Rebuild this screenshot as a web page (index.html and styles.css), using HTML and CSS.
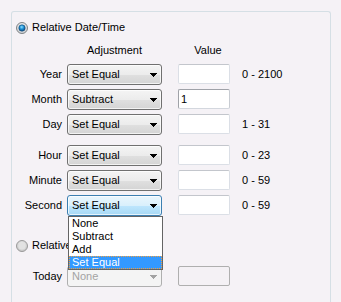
FILE: index.html
```html
<!DOCTYPE html>
<html lang="en">
<head>
    <meta charset="UTF-8">
    <title>Relative Date/Time</title>
    <link rel="stylesheet" href="styles.css">
</head>
<body>
    <div class="group">
        <div class="option">
            <svg class="radio" width="12" height="12" viewBox="0 0 12 12">
                <defs>
                    <radialGradient id="ring-on" cx="50%" cy="40%" r="60%">
                        <stop offset="0" stop-color="#ffffff"/>
                        <stop offset="1" stop-color="#c9cbce"/>
                    </radialGradient>
                    <radialGradient id="dot-on" cx="45%" cy="35%" r="65%">
                        <stop offset="0" stop-color="#8fe0ff"/>
                        <stop offset="0.5" stop-color="#1a8fd4"/>
                        <stop offset="1" stop-color="#0d4a86"/>
                    </radialGradient>
                </defs>
                <circle cx="6" cy="6" r="5.5" fill="url(#ring-on)" stroke="#7f8487"/>
                <circle cx="6" cy="6" r="3.2" fill="url(#dot-on)" stroke="#164a73" stroke-width="0.6"/>
            </svg>
            <span>Relative Date/Time</span>
        </div>

        <div class="row head">
            <span class="row-label"></span>
            <span class="col-combo">Adjustment</span>
            <span class="col-value">Value</span>
        </div>

        <div class="row first">
            <span class="row-label">Year</span>
            <div class="combo"><span>Set Equal</span><svg class="arrow" width="7" height="4" viewBox="0 0 7 4"><path d="M0 0h7v1h-1v1h-1v1h-1v1h-1v-1h-1v-1h-1v-1h-1z"/></svg></div>
            <div class="field"></div>
            <span class="range">0 - 2100</span>
        </div>
        <div class="row">
            <span class="row-label">Month</span>
            <div class="combo"><span>Subtract</span><svg class="arrow" width="7" height="4" viewBox="0 0 7 4"><path d="M0 0h7v1h-1v1h-1v1h-1v1h-1v-1h-1v-1h-1v-1h-1z"/></svg></div>
            <div class="field filled">1</div>
        </div>
        <div class="row">
            <span class="row-label">Day</span>
            <div class="combo"><span>Set Equal</span><svg class="arrow" width="7" height="4" viewBox="0 0 7 4"><path d="M0 0h7v1h-1v1h-1v1h-1v1h-1v-1h-1v-1h-1v-1h-1z"/></svg></div>
            <div class="field"></div>
            <span class="range">1 - 31</span>
        </div>

        <div class="row spaced">
            <span class="row-label">Hour</span>
            <div class="combo"><span>Set Equal</span><svg class="arrow" width="7" height="4" viewBox="0 0 7 4"><path d="M0 0h7v1h-1v1h-1v1h-1v1h-1v-1h-1v-1h-1v-1h-1z"/></svg></div>
            <div class="field"></div>
            <span class="range">0 - 23</span>
        </div>
        <div class="row">
            <span class="row-label">Minute</span>
            <div class="combo"><span>Set Equal</span><svg class="arrow" width="7" height="4" viewBox="0 0 7 4"><path d="M0 0h7v1h-1v1h-1v1h-1v1h-1v-1h-1v-1h-1v-1h-1z"/></svg></div>
            <div class="field"></div>
            <span class="range">0 - 59</span>
        </div>
        <div class="row">
            <span class="row-label">Second</span>
            <div class="combo open">
                <span>Set Equal</span><svg class="arrow" width="7" height="4" viewBox="0 0 7 4"><path d="M0 0h7v1h-1v1h-1v1h-1v1h-1v-1h-1v-1h-1v-1h-1z"/></svg>
                <ul class="list">
                    <li>None</li>
                    <li>Subtract</li>
                    <li>Add</li>
                    <li class="selected">Set Equal</li>
                </ul>
            </div>
            <div class="field"></div>
            <span class="range">0 - 59</span>
        </div>

        <div class="option second">
            <svg class="radio" width="12" height="12" viewBox="0 0 12 12">
                <defs>
                    <radialGradient id="ring-off" cx="50%" cy="40%" r="60%">
                        <stop offset="0" stop-color="#f4f4f4"/>
                        <stop offset="1" stop-color="#c4c4c4"/>
                    </radialGradient>
                </defs>
                <circle cx="6" cy="6" r="5.5" fill="url(#ring-off)" stroke="#9a9a9a"/>
                <circle cx="6" cy="6" r="3.5" fill="#e2e2e2"/>
            </svg>
            <!-- the open list covers the rest of this label -->
            <span class="clipped">Relative Today</span>
        </div>

        <div class="row today">
            <span class="row-label">Today</span>
            <div class="combo disabled"><span>None</span><svg class="arrow" width="7" height="4" viewBox="0 0 7 4"><path d="M0 0h7v1h-1v1h-1v1h-1v1h-1v-1h-1v-1h-1v-1h-1z"/></svg></div>
            <div class="field disabled"></div>
        </div>
    </div>
</body>
</html>
```

FILE: styles.css
```css
* {
    margin: 0;
    padding: 0;
    box-sizing: border-box;
}

body {
    font-family: "Liberation Sans", Arial, sans-serif;
    font-size: 11px;
    line-height: 13px;
    color: #000;
    background-color: #f5f2f6;
    padding: 11px 0 0 11px;
    height: 302px;
    overflow: hidden;
}

.group {
    width: 320px;
    height: 300px;
    border: 1px solid #d5dfe5;
    border-bottom: none;
    border-radius: 3px 3px 0 0;
    padding-top: 9px;
}

.option {
    display: flex;
    align-items: center;
    gap: 4px;
    height: 13px;
    padding-left: 4px;
    white-space: nowrap;
}

.option.second {
    margin-top: 23px;
}

.option .clipped {
    width: 36px;
    overflow: hidden;
}

.radio {
    flex: none;
}

.row {
    display: flex;
    align-items: center;
    height: 21px;
    margin-top: 4px;
}

.row.head {
    height: 13px;
    margin-top: 10px;
}

.row.first {
    margin-top: 7px;
}

.row.spaced {
    margin-top: 10px;
}

.row.today {
    margin-top: 14px;
}

.row-label {
    width: 50px;
    margin-right: 5px;
    text-align: right;
}

.col-combo {
    width: 95px;
    margin-right: 16px;
    text-align: center;
}

.col-value {
    width: 52px;
    padding-left: 8px;
    text-align: center;
}

.combo {
    position: relative;
    display: flex;
    align-items: center;
    justify-content: space-between;
    width: 95px;
    height: 21px;
    margin-right: 16px;
    padding: 0 4px 0 4px;
    border: 1px solid #707070;
    border-radius: 3px;
    background: linear-gradient(#f4f4f4, #ececec 50%, #e0e0e0 51%, #d4d4d4);
    box-shadow: inset 0 0 0 1px rgba(255, 255, 255, 0.7);
}

.combo.open {
    border-color: #3c7fb1;
    background: linear-gradient(#eaf6fd, #d9f0fc 50%, #bee6fd 51%, #a7d9f5);
}

.combo.disabled {
    border-color: #afafaf;
    background: #f4f4f4;
    color: #a3a3a3;
    box-shadow: none;
}

.arrow path {
    fill: #000;
}

.combo.disabled .arrow path {
    fill: #a3a3a3;
}

.list {
    position: absolute;
    top: 20px;
    left: 0;
    width: 95px;
    list-style: none;
    background-color: #fff;
    border: 1px solid #646464;
    z-index: 2;
}

.list li {
    height: 13px;
    padding-left: 3px;
    line-height: 13px;
}

.list li.selected {
    background-color: #3399ff;
    color: #fff;
    outline: 1px dotted #f0a040;
    outline-offset: -1px;
}

.field {
    width: 52px;
    height: 20px;
    align-self: flex-start;
    margin-right: 12px;
    padding: 3px 2px;
    background-color: #fff;
    border: 1px solid #dbdfe6;
    border-top-color: #c3c6cc;
    border-radius: 2px;
}

.field.filled {
    border-color: #9fa2a8 #c8ccd2 #d3d7de #9fa2a8;
}

.field.disabled {
    background-color: #f4f1f5;
    border-color: #afafaf;
}

.range {
    white-space: nowrap;
}
```
